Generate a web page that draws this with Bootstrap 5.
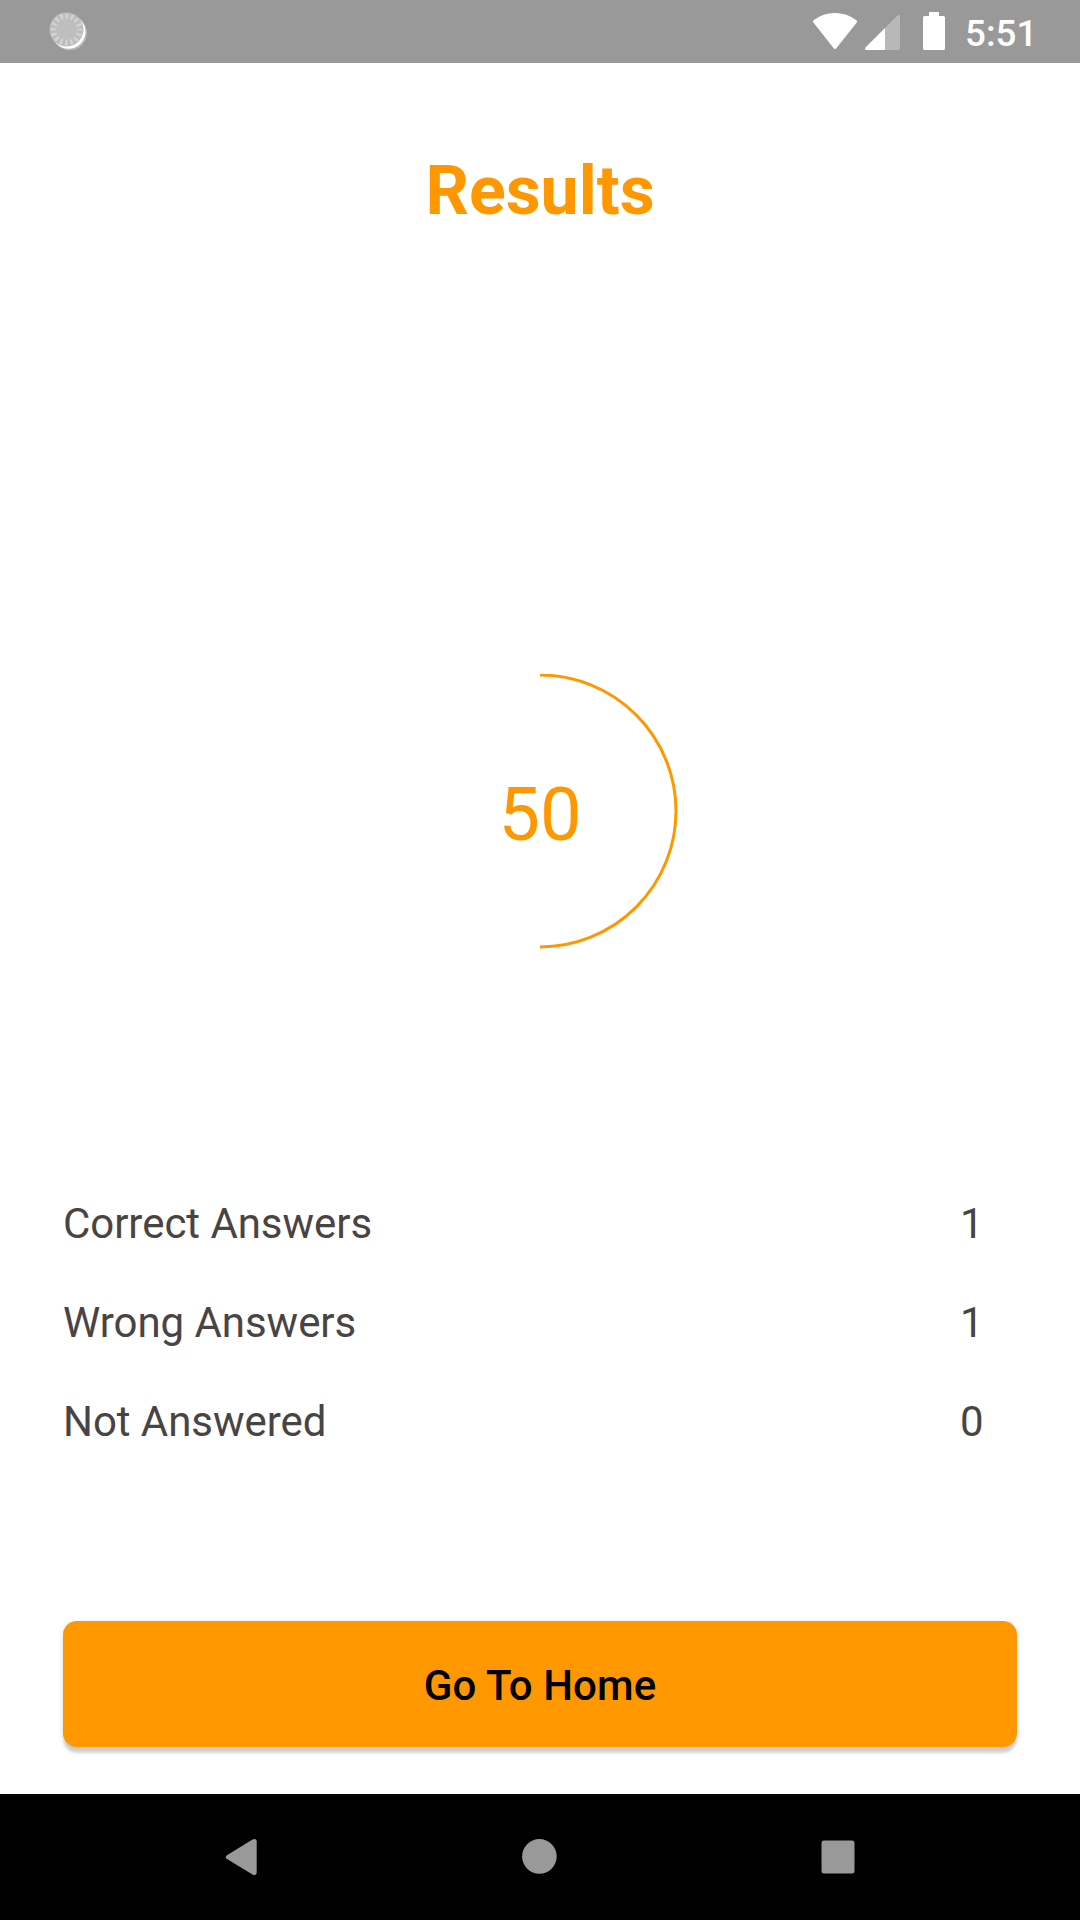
<!DOCTYPE html>
<html lang="en">
<head>
<meta charset="utf-8">
<meta name="viewport" content="width=device-width, initial-scale=1">
<title>Results</title>
<link href="https://cdn.jsdelivr.net/npm/bootstrap@5.3.0/dist/css/bootstrap.min.css" rel="stylesheet">
<style>
  body { font-family: Roboto, "Liberation Sans", sans-serif; background: #fff; height: 1920px; overflow: hidden; }
  svg { display: block; flex: none; }
  .status-bar { height: 63px; background: #999; padding: 0 43px 0 48px; }
  .clock { width: 73px; font-size: 36.750px; line-height: 63px; height: 63px; font-weight: 500; margin-left: 17px; padding: 2px 0 0 1px; }
  .accent { color: #ff9800; }
  .page-title { font-size: 68px; line-height: 80px; margin-top: 88px; }
  .score-area { height: 275px; margin-top: 443px; }
  .score-ring { width: 275px; height: 275px; }
  .score-value { font-size: 74px; line-height: 88px; padding-top: 6px; }
  .stats { margin-top: 225px; padding: 0 96.500px 0 63px; color: #494444; font-size: 42px; }
  .stat-line { height: 99px; line-height: 99px; }
  .stat-line span:first-child { letter-spacing: -.05px; }
  .home-btn { --bs-btn-bg: #ff9800; --bs-btn-hover-bg: #ff9800; margin: 0 63px 47px; height: 126px; border: 0; border-radius: 14px; font-size: 42px; letter-spacing: .1px; font-weight: 500; color: #000; background: #ff9800; box-shadow: 0 7px 3px -1px rgba(0,0,0,.15), 0 2px 6px rgba(0,0,0,.12); padding: 3px 0 0; }
  .nav-keys { height: 126px; background: #000; }
</style>
<script src="https://cdn.jsdelivr.net/npm/bootstrap@5.3.0/dist/js/bootstrap.bundle.min.js"></script>
</head>
<body class="d-flex flex-column">
  <header class="status-bar d-flex align-items-center justify-content-between text-white">
    <svg width="42" height="63" viewBox="48 0 42 63">
      <circle cx="69.7" cy="33" r="17.3" fill="#c4c4c4" opacity=".75"/>
      <circle cx="68.5" cy="31.7" r="17" fill="#fff"/>
      <circle cx="66.5" cy="29.5" r="17" fill="#bebebe"/>
      <circle cx="66.5" cy="29.5" r="13.3" fill="none" stroke="#d4d4d4" stroke-width="5.4" stroke-dasharray="2.2 3.022" stroke-dashoffset="1.1"/>
    </svg>
    <div class="d-flex">
      <svg width="136" height="63" viewBox="811 0 136 63" fill="#fff">
        <path d="M813.4 22.500q-1.200-1.200.2-2.200Q823 13 835 13t21.400 7.300q1.400 1 .2 2.400L836.500 48q-1.500 1.800-3 0Z"/>
        <path d="M885 28 865.700 47.300q-1.200 1.500-.4 2.200.4.500 1.700.5H885Z"/>
        <path fill="#b8b8b8" d="M885 50h13q2 0 2-2V16q0-1-1-1.100t-2 1L885 28Z"/>
        <path d="M929 12h10v4h4.500q1.500 0 1.500 1.500v31q0 1.500-1.500 1.500h-19q-1.500 0-1.500-1.500v-31q0-1.500 1.500-1.500h4.500Z"/>
      </svg>
      <div class="clock">5:51</div>
    </div>
  </header>

  <main class="flex-grow-1 d-flex flex-column">
    <h1 class="page-title accent fw-bold text-center mb-0">Results</h1>

    <section class="score-area d-flex justify-content-center">
      <div class="score-ring position-relative d-flex align-items-center justify-content-center">
        <svg class="position-absolute top-0 start-0" width="275" height="275" viewBox="0 0 275 275">
          <path d="M137 1a136 136 0 0 1 0 272" fill="none" stroke="#ff9800" stroke-width="3"/>
        </svg>
        <div class="score-value accent">50</div>
      </div>
    </section>

    <section class="stats">
      <div class="stat-line d-flex justify-content-between"><span>Correct Answers</span><span>1</span></div>
      <div class="stat-line d-flex justify-content-between"><span>Wrong Answers</span><span>1</span></div>
      <div class="stat-line d-flex justify-content-between"><span>Not Answered</span><span>0</span></div>
    </section>

    <button type="button" class="btn home-btn mt-auto">Go To Home</button>
  </main>

  <footer class="nav-keys">
    <svg width="1080" height="126" viewBox="0 1794 1080 126" fill="#999">
      <path d="M226.600 1858.700q-2-1.600 0-3.200L252.500 1839.600q3.600-1.600 4.200 1.600v31.800q-.6 3.200-4.200 1.600Z"/>
      <circle cx="539.400" cy="1856.400" r="17.300"/>
      <rect x="821.500" y="1840.500" width="33" height="33" rx="2.500"/>
    </svg>
  </footer>
</body>
</html>
